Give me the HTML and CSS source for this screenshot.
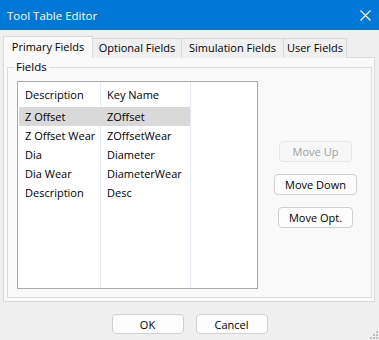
FILE: index.html
```html
<!DOCTYPE html>
<html>
<head>
<meta charset="utf-8">
<title>Tool Table Editor</title>
<link rel="stylesheet" href="styles.css">
</head>
<body>
<div class="window">
  <div class="titlebar">
    <span class="title">Tool Table Editor</span>
    <svg class="close" width="11" height="11" viewBox="0 0 11 11"><path d="M0.5 0.5 L10.5 10.5 M10.5 0.5 L0.5 10.5" stroke="#fff" stroke-width="1.1" fill="none"/></svg>
  </div>
  <div class="tabstrip">
    <div class="tab active t1">Primary Fields</div>
    <div class="tab t2">Optional Fields</div>
    <div class="tab t3">Simulation Fields</div>
    <div class="tab t4">User Fields</div>
  </div>
  <div class="panel">
    <fieldset class="group">
      <legend>Fields</legend>
      <div class="group-body">
        <div class="listview">
          <div class="lv-row lv-header"><span>Description</span><span>Key Name</span></div>
          <div class="lv-row selected"><span>Z Offset</span><span>ZOffset</span></div>
          <div class="lv-row"><span>Z Offset Wear</span><span>ZOffsetWear</span></div>
          <div class="lv-row"><span>Dia</span><span>Diameter</span></div>
          <div class="lv-row"><span>Dia Wear</span><span>DiameterWear</span></div>
          <div class="lv-row"><span>Description</span><span>Desc</span></div>
        </div>
        <div class="side-buttons">
          <button class="btn w-up" disabled>Move Up</button>
          <button class="btn w-down">Move Down</button>
          <button class="btn w-opt">Move Opt.</button>
        </div>
      </div>
    </fieldset>
  </div>
  <div class="footer">
    <button class="btn dlg">OK</button>
    <button class="btn dlg">Cancel</button>
  </div>
  <svg class="grip" width="8" height="8" viewBox="0 0 8 8">
    <rect x="6" y="0" width="2" height="2" fill="#bcbcbc"/>
    <rect x="3" y="3" width="2" height="2" fill="#bcbcbc"/>
    <rect x="6" y="3" width="2" height="2" fill="#bcbcbc"/>
    <rect x="0" y="6" width="2" height="2" fill="#bcbcbc"/>
    <rect x="3" y="6" width="2" height="2" fill="#bcbcbc"/>
    <rect x="6" y="6" width="2" height="2" fill="#bcbcbc"/>
  </svg>
</div>
</body>
</html>
```
FILE: styles.css
```css
* { box-sizing: border-box; }
html, body { margin: 0; padding: 0; }
body {
  background: #f0f0f0;
  font-family: "Open Sans", "Noto Sans", sans-serif;
  font-size: 11px;
  color: #000;
}
.window {
  position: relative;
  width: 379px;
  height: 340px;
  display: flex;
  flex-direction: column;
  overflow: hidden;
}
.titlebar {
  height: 30px;
  flex: none;
  background: #0078d7;
  color: #fff;
  display: flex;
  align-items: center;
  justify-content: space-between;
  padding: 0 8px 0 7px;
  font-size: 11.5px;
}
.close { display: block; }

.tabstrip {
  display: flex;
  align-items: flex-end;
  height: 22px;
  margin-top: 6px;
  padding-left: 3px;
  margin-bottom: -1px;
  position: relative;
  z-index: 1;
  flex: none;
}
.tab {
  height: 20px;
  border: 1px solid #dadada;
  border-bottom: none;
  background: #f0f0f0;
  text-align: center;
  line-height: 18px;
  white-space: nowrap;
}
.tab + .tab { margin-left: -1px; }
.tab.active {
  height: 22px;
  background: #f9f9f9;
  line-height: 20px;
}
.t1 { width: 90px; }
.t2 { width: 90px; }
.t3 { width: 103px; }
.t4 { width: 64px; }

.panel {
  height: 245px;
  flex: none;
  margin: 0 4px 0 3px;
  border: 1px solid #dadada;
  background: #f9f9f9;
  padding: 1px 2px 3px 3px;
  display: flex;
  flex-direction: column;
}
.group {
  flex: 1;
  margin: 0;
  padding: 0;
  min-width: 0;
  border: 1px solid #dcdcdc;
  display: flex;
  flex-direction: column;
}
.group legend {
  margin-left: 6px;
  padding: 0 2px;
  font-size: 11.5px;
  line-height: 16px;
}
.group-body {
  flex: 1;
  display: flex;
  padding: 6px 0 8px 9px;
}
.listview {
  width: 241px;
  height: 208px;
  flex: none;
  border: 1px solid #a9a9a9;
  background:
    linear-gradient(to right,
      transparent 82px, #e3ebf5 82px, #e3ebf5 83px, transparent 83px,
      transparent 172px, #e3ebf5 172px, #e3ebf5 173px, transparent 173px),
    #fff;
}
.lv-row {
  display: grid;
  grid-template-columns: 81px 90px;
  width: 171px;
  margin-left: 1px;
  height: 19px;
  align-items: center;
  white-space: nowrap;
}
.lv-row span:first-child { padding-left: 6px; }
.lv-row span:last-child { padding-left: 7px; }
.lv-header { height: 25px; }
.lv-row.selected { background: #d9d9d9; }

.side-buttons {
  flex: 1;
  display: flex;
  flex-direction: column;
  align-items: center;
  gap: 12px;
  padding-top: 60px;
  padding-left: 2px;
}
.btn {
  font-family: inherit;
  font-size: 11px;
  color: #000;
  height: 21px;
  padding: 0;
  border: 1px solid #d0d0d0;
  border-radius: 4px;
  background: #fdfdfd;
}
.btn:disabled {
  color: #a0a0a0;
  border-color: #e6e6e6;
  background: #f7f7f7;
}
.w-up { width: 73px; }
.w-down { width: 83px; }
.w-opt { width: 75px; }

.footer {
  display: flex;
  justify-content: center;
  gap: 12px;
  padding-top: 12px;
}
.dlg { width: 72px; height: 20px; }

.grip {
  position: absolute;
  right: 1px;
  bottom: 1px;
}
```
